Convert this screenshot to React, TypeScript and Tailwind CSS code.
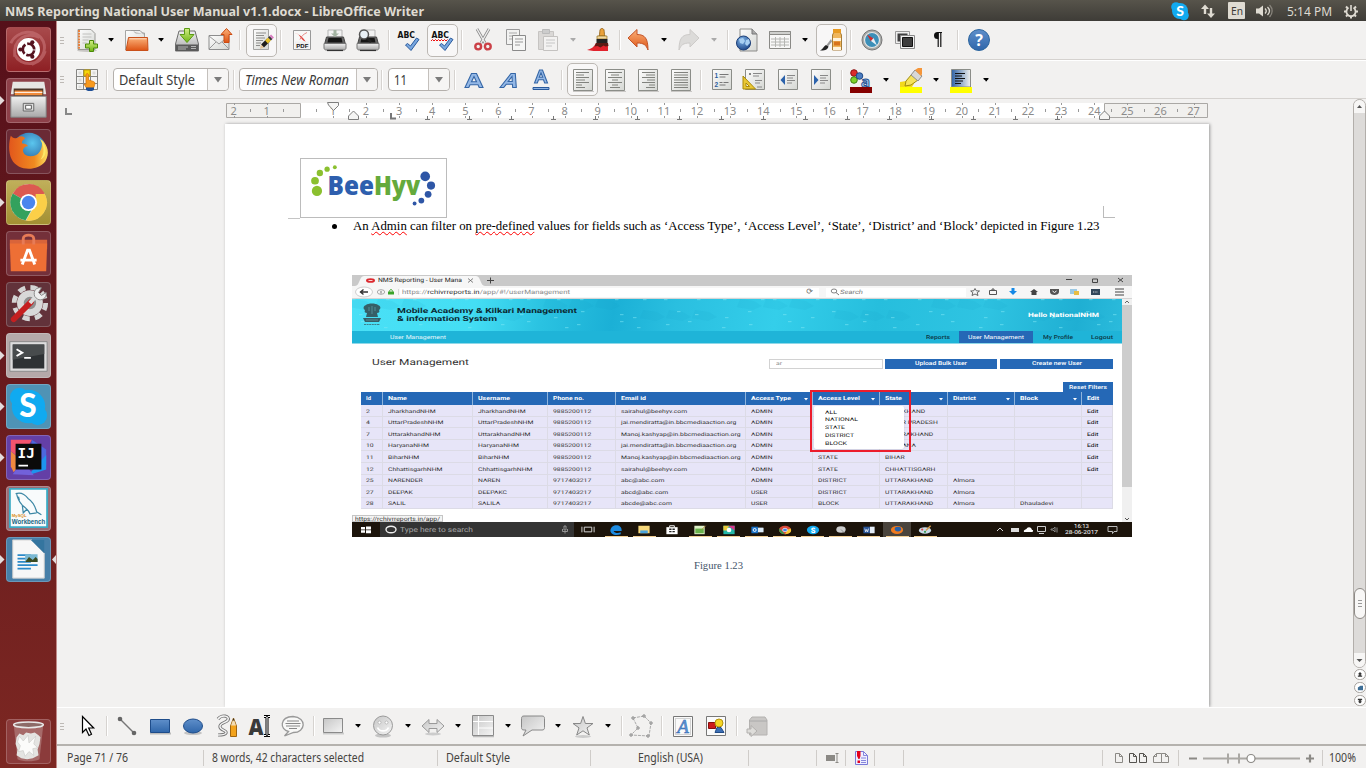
import React, { useLayoutEffect, useRef, useState } from "react";

/* Text stretched or condensed horizontally so that it fills a given width. */
function Fit({ w, className = "", children }: { w: number; className?: string; children: React.ReactNode }) {
  const ref = useRef<HTMLSpanElement>(null);
  const [scale, setScale] = useState(1);
  useLayoutEffect(() => {
    if (ref.current && ref.current.offsetWidth > 0) {
      const r = document.createRange();
      r.selectNodeContents(ref.current);
      const natural = r.getBoundingClientRect().width;
      if (natural > 0) setScale(w / natural);
    }
  }, [w]);
  return (
    <span className={"inline-block shrink-0 whitespace-nowrap text-left " + className} style={{ width: w }}>
      <span ref={ref} className="inline-block origin-left" style={{ transform: `scaleX(${scale})` }}>
        {children}
      </span>
    </span>
  );
}

type P = { m?: string; children?: React.ReactNode };

const Ic = ({ m = "", children }: P) => (
  <svg className={"h-[26px] w-[26px] shrink-0 " + m} viewBox="0 0 26 26" fill="none">
    {children}
  </svg>
);
const Btn = ({ m = "", children }: P) => (
  <div className={"flex h-[33px] w-[31px] shrink-0 items-center justify-center rounded-[5px] border border-[#bcb8b3] bg-[#f8f7f7] " + m}>
    <Ic>{children}</Ic>
  </div>
);
const Sep = ({ m = "" }: P) => <div className={"h-5 w-[2px] shrink-0 border-l border-[#d6d3d0] bg-white " + m} />;
const Arr = ({ m = "", c = "#000" }: { m?: string; c?: string }) => (
  <svg className={"h-[8px] w-[8px] shrink-0 " + m} viewBox="0 0 8 8">
    <path d="M1.500 2h5v1l-1.500 1.500v.7H3.500v-.7L1.500 3z" fill={c} />
  </svg>
);
const Grip = ({ m = "" }: P) => (
  <div className={"flex w-[4px] shrink-0 flex-col gap-[2px] " + m}>
    <i className="h-px bg-[#bdb9b5]" />
    <i className="h-px bg-[#bdb9b5]" />
    <i className="h-px bg-[#bdb9b5]" />
  </div>
);

const Defs = () => (
  <svg className="absolute h-0 w-0">
    <defs>
      <linearGradient id="gGreen" x1="0" y1="0" x2="0" y2="1"><stop offset="0" stopColor="#d2ef85" /><stop offset="1" stopColor="#6fb414" /></linearGradient>
      <linearGradient id="gOrange" x1="0" y1="0" x2="0" y2="1"><stop offset="0" stopColor="#fbb27a" /><stop offset="1" stopColor="#dd5314" /></linearGradient>
      <linearGradient id="gGrey" x1="0" y1="0" x2="0" y2="1"><stop offset="0" stopColor="#f0f0f0" /><stop offset="1" stopColor="#a8a8a8" /></linearGradient>
      <linearGradient id="gBlue" x1="0" y1="0" x2="0" y2="1"><stop offset="0" stopColor="#5f8fca" /><stop offset="1" stopColor="#2f66aa" /></linearGradient>
      <linearGradient id="gSheet" x1="0" y1="0" x2="1" y2="1"><stop offset="0" stopColor="#fdfdfd" /><stop offset="1" stopColor="#d5d7d3" /></linearGradient>
      <linearGradient id="gSoft" x1="0" y1="0" x2="1" y2="1"><stop offset="0" stopColor="#c6c6c6" /><stop offset="1" stopColor="#f4f4f4" /></linearGradient>
      <linearGradient id="gBg" x1="0" y1="0" x2="1" y2="0"><stop offset="0" stopColor="#2f62a5" /><stop offset="1" stopColor="#f1f1ee" /></linearGradient>
      <radialGradient id="gGlobe" cx=".4" cy=".3" r=".8"><stop offset="0" stopColor="#7fb5e8" /><stop offset="1" stopColor="#153c80" /></radialGradient>
      <radialGradient id="gFox" cx=".6" cy=".3" r=".8"><stop offset="0" stopColor="#5bc6ee" /><stop offset="1" stopColor="#143a80" /></radialGradient>
      <linearGradient id="gFoxBody" x1="0" y1="0" x2="1" y2="0"><stop offset="0" stopColor="#e2571c" /><stop offset=".65" stopColor="#f08a20" /><stop offset="1" stopColor="#fde060" /></linearGradient>
    </defs>
  </svg>
);

/* ---------- toolbar drawings ---------- */
const NewDoc = () => (
  <>
    <ellipse cx="13" cy="23.500" rx="10" ry="1.500" fill="#c9c7c4" />
    <path d="M4 2.500h13l4 4v16H4z" fill="url(#gSheet)" stroke="#9a9a96" />
    <path d="M5 3v19" stroke="#e5813f" strokeWidth="2" strokeDasharray="2 .8" />
    <path d="M8.500 7h9M8.500 10h9M8.500 13h6M8.500 16h4" stroke="#c0c0be" />
    <path d="M15.500 13.500h4v3.500h4v4h-4v3.500h-4V21h-4v-4h4z" fill="url(#gGreen)" stroke="#4a8a08" />
  </>
);
const OpenDoc = () => (
  <>
    <path d="M2.500 23V3.500h8l2 2.500h9V14" fill="url(#gSheet)" stroke="#a5a5a3" />
    <path d="M8 3.500h9l4 4" stroke="#999" fill="#eee" />
    <path d="M5.500 10.500h19l.5 13H3z" fill="url(#gOrange)" stroke="#c9501a" />
    <path d="M6.500 11.800h17" stroke="#fddac0" />
  </>
);
const SaveIc = () => (
  <>
    <path d="M5 4h16l3.500 13v7H1.500v-7z" fill="url(#gGrey)" stroke="#6d6d6d" />
    <path d="M2 17.500h22V24H2z" fill="#5a5a5a" />
    <path d="M4 20h10M4 22h8M17 19.500h5M17 21.500h5" stroke="#ccc" strokeWidth=".8" />
    <path d="M10.500 1.500h5v6h4.500L13 15.500 6 7.500h4.500z" fill="url(#gGreen)" stroke="#5a9a14" />
  </>
);
const MailIc = () => (
  <>
    <path d="M2 8.500h20v14H2z" fill="url(#gSheet)" stroke="#8d8d8d" />
    <path d="M2 9l10 8 10-8M2 22l7-7M22 22l-7-7" stroke="#9a9a9a" />
    <path d="M19.500 1.500L25 7.500H22v8h-5v-8h-3z" fill="url(#gOrange)" stroke="#cc4a10" />
  </>
);
const EditIc = () => (
  <>
    <path d="M4.500 2.500h15v20h-15z" fill="url(#gSheet)" stroke="#a5a5a3" />
    <path d="M7 6h10M7 8.500h8M7 11h9M7 13.500h7M7 16h5M7 18.500h4" stroke="#8d8d8b" />
    <path d="M13.500 19l6-6" stroke="#1d1d1d" strokeWidth="4" />
    <path d="M17.500 15l3-3" stroke="#e5c12c" strokeWidth="4" />
    <path d="M20.500 12l1.500-1.500" stroke="#333" strokeWidth="4" />
    <path d="M22 10.500l1.500-1.500" stroke="#d77bc0" strokeWidth="4" />
    <path d="M12 17.500l-1 4.500 4-1.500z" fill="#e5c596" />
  </>
);
const PdfIc = () => (
  <>
    <path d="M4.500 3.500h17v19h-17z" fill="#f8f8f7" stroke="#999" />
    <path d="M6 6c3 .5 8 4 11 9-3-1-5-4-8-8z" fill="#e2413b" />
    <path d="M18 5.500c-4 2-6 4-7 7" stroke="#e58a86" />
    <path d="M6 14.500h14v7H6z" fill="#f0f0f0" />
    <text x="7.300" y="20.500" fontSize="6" fontWeight="900" fontFamily="Liberation Sans, sans-serif" fill="#111">PDF</text>
  </>
);
const PrintIc = ({ glass = false }: { glass?: boolean }) => (
  <>
    <path d="M6 3h14v11H6z" fill="#f2f2f2" stroke="#b5b5b5" />
    <path d="M4.500 10h17l2 7.500h-21z" fill="#666" stroke="#444" />
    <path d="M6.500 11h13l1 4.500H5.500z" fill="#161616" />
    <path d="M2 16.500h22V21c0 1-1 2-2 2H4c-1 0-2-1-2-2z" fill="url(#gGrey)" stroke="#777" />
    <path d="M5 23.500h16" stroke="#333" strokeWidth="1.200" />
    {glass ? (
      <>
        <circle cx="9" cy="7.500" r="4.500" fill="#e8f0f6" stroke="#555" strokeWidth="1.500" />
        <path d="M12 11l4 4" stroke="#222" strokeWidth="2.500" />
      </>
    ) : (
      <path d="M11.500 3h3v3.500H17L13 10 9 6.500h2.500z" fill="#a3b3a2" />
    )}
  </>
);
const AbcIc = ({ wave = false }: { wave?: boolean }) => (
  <>
    <text x="1.500" y="11" fontSize="9" fontWeight="900" textLength="17.500" lengthAdjust="spacingAndGlyphs" fontFamily="DejaVu Sans, sans-serif" fill="#111">ABC</text>
    {wave && <path d="M1 14l1.500-1.500L4 14l1.500-1.500L7 14l1.500-1.500L10 14l1.500-1.500L13 14l1.500-1.500L16 14l1.500-1.500" stroke="#e11" />}
    <path d="M9.500 18l2-1.500 3 2.500L20.500 11l2.500 1.500L15 23.500z" fill="#79a7df" stroke="#2a5a9c" />
  </>
);
const CutIc = () => (
  <>
    <path d="M7 2l8 14M19 2l-8 14" stroke="#888" strokeWidth="2.800" />
    <path d="M7 2l8 14M19 2l-8 14" stroke="#ededed" strokeWidth="1.400" />
    <circle cx="8.200" cy="19.500" r="2.900" stroke="#cb4047" strokeWidth="2.400" />
    <circle cx="17.800" cy="19.500" r="2.900" stroke="#cb4047" strokeWidth="2.400" />
  </>
);
const CopyIc = () => (
  <>
    <path d="M3.500 2.500h13v15h-13z" fill="#f2f2f1" stroke="#999" />
    <path d="M6 6h8M6 9h5M6 12h5" stroke="#aaa" />
    <path d="M9.500 8.500h13v15h-13z" fill="#f6f6f5" stroke="#8a8a8a" />
    <path d="M12 12h8M12 15h8M12 18h5" stroke="#999" />
  </>
);
const PasteIc = () => (
  <>
    <path d="M3.500 4.500h15v18h-15z" fill="#dad8d6" stroke="#c6c4c2" />
    <path d="M7.500 2.500h7v4h-7z" fill="#ccc" stroke="#bbb" />
    <path d="M8.500 9.500h14v14h-14z" fill="#f3f2f1" stroke="#c4c2c0" />
    <path d="M11 13h9M11 16h9M11 19h6" stroke="#c6c6c6" />
  </>
);
const BrushIc = () => (
  <>
    <path d="M1 23c4-1 7-3 9-7l12 1v7c-6 0-14 .5-21-1z" fill="#e1222c" />
    <path d="M13 9c1-2 .5-4 1-6 .5-2 3.500-2 4 0s0 4 1 6z" fill="#eaa23b" stroke="#8b5b12" strokeWidth=".8" />
    <path d="M11 9h10v3H11z" fill="#f2d9a1" stroke="#96701d" strokeWidth=".7" />
    <path d="M10.500 12h11v4h-11z" fill="#222" />
    <path d="M10 16h12l.5 3-3 .5-2-1-3 2-3-1.500-3 .5z" fill="#5b1a14" />
  </>
);
const Undo = ({ off = false }: { off?: boolean }) => (
  <g transform={off ? "translate(26 0) scale(-1 1)" : undefined}>
    <path d="M3 11L12 2.500v5c8 0 11 4 11 15.500-2-5-4-7-11-7v4z" fill={off ? "#dcdbd9" : "url(#gOrange)"} stroke={off ? "#cdcbc9" : "#c4552a"} />
  </g>
);
const GlobeIc = () => (
  <>
    <path d="M6 2h12l5 5v17H6z" fill="url(#gSheet)" stroke="#8d8d8a" />
    <path d="M18 2v5h5" fill="#aaa" stroke="#777" />
    <circle cx="9.500" cy="16" r="7" fill="url(#gGlobe)" stroke="#1b3e78" />
    <path d="M5 12l4-1 2 3-2 3-3-1zM12 13l3-1 1 4-3 3-2-2z" fill="#a8cff2" />
  </>
);
const TableIc = () => (
  <>
    <path d="M2.500 4.500h21v17h-21z" fill="#f7f7f6" stroke="#8a8a86" />
    <path d="M2.500 4.500h21v3h-21z" fill="#cfd0cd" stroke="#8a8a86" />
    <path d="M4 12h18M4 15h18M4 18h18M8.500 10v10M13 10v10M17.500 10v10" stroke="#b5b6b2" />
  </>
);
const PaintIc = () => (
  <>
    <path d="M13.500 8l1.500-3h6l1.500 3v15h-9z" fill="#f0b65b" stroke="#a57d3a" />
    <path d="M14 2h8v4h-8z" fill="#e79a22" />
    <path d="M14 11h8v3h-8zM14 20h8v3h-8z" fill="#fff3dc" />
    <path d="M15 14.500h6v4h-6z" fill="#d8741b" />
    <path d="M12 12L7.500 18l1.500 1.500 4-5z" fill="#999" />
    <path d="M7 18c-2 1-3 4-6 5.500 4 0 7.500 0 8.500-4z" fill="#222" />
  </>
);
const CompassIc = () => (
  <>
    <circle cx="13" cy="13" r="10" fill="#a9aba8" stroke="#777" />
    <circle cx="13" cy="13" r="7.500" fill="#3c8fb8" stroke="#e5e5e5" strokeWidth="1.200" />
    <path d="M8 7.500l6.500 4-2.500 3z" fill="#d42a2a" />
    <path d="M18 18.500l-6-4.500 2.500-3z" fill="#e6f0f6" />
  </>
);
const ScreensIc = () => (
  <>
    <path d="M3.500 4.500h14v12h-14z" fill="#eee" stroke="#999" />
    <path d="M5.500 6.500h10v8h-10z" fill="#3f3f3f" />
    <path d="M8.500 8.500h14v13h-14z" fill="#f1f1f1" stroke="#888" />
    <path d="M10.500 10.500h10v9h-10z" fill="#3d3d3d" stroke="#111" />
  </>
);
const HelpIc = () => (
  <>
    <circle cx="13" cy="13" r="10.500" fill="url(#gBlue)" stroke="#2c669f" />
    <text x="13" y="19" textAnchor="middle" fontSize="16" fontWeight="700" fontFamily="Noto Sans, sans-serif" fill="#fff">?</text>
  </>
);
const StylesIc = () => (
  <>
    <path d="M2.500 2.500h21v20h-21z" fill="#f4f4f3" stroke="#858582" />
    <path d="M2 9.500h22M2 16.500h22M9.500 2v21M16.500 2v21" stroke="#858582" />
    <path d="M4.500 4.500h3v3h-3zM18.500 4.500h3v3h-3zM4.500 11.500h3v3h-3zM4.500 18.500h3v2.500h-3z" fill="#dcdcda" />
    <path d="M10 3h6v6h-6z" fill="#f5d60a" stroke="#c4a000" />
    <path d="M12 8c0-2 2.500-2 2.500 0v5l5 1.500c1.500.5 1.500 2 1 4L19.500 21h-7l-2.500-4 2 .5z" fill="#f79a1e" stroke="#d87a10" strokeWidth=".8" />
    <path d="M12 20.500h8V23l-2 1h-4l-2-1z" fill="#1f4f96" />
  </>
);
const LetterA = ({ kind }: { kind: "b" | "i" | "u" }) => (
  <>
    <path
      d={
        kind === "b"
          ? "M4 20.500l6.500-14h5l6.500 14h-3.800l-1.200-2.700H9L7.800 20.500zM10.500 14.800h5L13 9.500z"
          : kind === "i"
          ? "M5 20.500l11-14h4.300l1 14h-3.600l-.3-3.200h-6.200l-2.500 3.200zM13.200 14.500h4.100l-.3-5z"
          : "M6.500 16l5-13h3l5 13h-2.800l-1.200-3.200h-5L9.300 16zM11.300 10.200h3.400L13 5.800z"
      }
      fill="#94b8e6"
      stroke="#3566a6"
      strokeWidth="1.100"
      fillRule="evenodd"
    />
    {kind === "u" && <path d="M5 20.500h16v2H5z" fill="#8fb3e2" stroke="#28599b" />}
  </>
);
const AlignIc = ({ d }: { d: string }) => (
  <>
    <path d="M3 24.500h21" stroke="#c9c7c5" />
    <path d="M3.500 2.500h19v21h-19z" fill="url(#gSheet)" stroke="#8b8d88" />
    <path d={d} stroke="#80827d" strokeWidth="1" />
  </>
);
const Sheet = ({ children }: P) => (
  <>
    <path d="M3.500 2.500h19v20h-19z" fill="url(#gSheet)" stroke="#8b8d88" />
    {children}
  </>
);

const Combo = ({ m, text, w, fs }: { m: string; text: string; w: number; fs: string }) => (
  <div className={"flex h-[23px] shrink-0 items-center rounded-[4px] border border-[#b4b0ac] bg-white text-[13.500px] text-[#3a3a3a] " + m}>
    <Fit w={w} className={"ml-[5px] pt-px leading-[21px] " + fs}>{text}</Fit>
    <div className="ml-auto flex h-full w-[21px] items-center justify-center rounded-r-[4px] border-l border-[#c4c0bc] bg-[#f6f5f4]">
      <svg className="h-[6px] w-[8px]" viewBox="0 0 8 6"><path d="M0 0h8L4 5.500z" fill="#7b7b7b" /></svg>
    </div>
  </div>
);

function Ruler() {
  const x = (n: number) => 299.8 + 33.1 * n - 225;
  const marks = Array.from({ length: 30 }, (_, i) => i - 2);
  return (
    <svg className="ml-[168px] h-[24px] w-[990px] shrink-0" viewBox="0 0 990 24">
      <path d="M75 4h805v15H75z" fill="#fff" />
      <path d="M1.500 4.500h74v14h-74zM879.500 4.500h103v14h-103z" fill="#f1f0ee" stroke="#aaa8a5" />
      {marks.map((n) => (
        <React.Fragment key={n}>
          {n !== 0 && n < 28 && (
            <text x={x(n)} y="15.500" textAnchor="middle" fontSize="11" fontFamily="Noto Sans, sans-serif" fill="#8b8b8b">{Math.abs(n)}</text>
          )}
          {n < 27 && <path d={`M${Math.round(x(n) + 16.5) + 0.5} 10v3`} stroke="#999" />}
          {n !== 0 && n < 28 && <path d={`M${Math.round(x(n)) + 0.5} 4v2M${Math.round(x(n)) + 0.5} 17v2`} stroke="#999" />}
        </React.Fragment>
      ))}
      <path d="M102.500 3.500h11v3l-5 5-5-5.500z" fill="#f5f5f4" stroke="#7d7d7d" />
      <path d="M123.500 20.500v-3.500l5-5 5 5v3.500zM874.500 20.500v-3.500l5-5 5 5v3.500z" fill="#f5f5f4" stroke="#7d7d7d" />
      <path d="M166 14v5.500h5" stroke="#777" strokeWidth="2" fill="none" />
      {Array.from({ length: 17 }, (_, i) => 201.5 + 42 * i).filter((v) => v < 870).map((v) => (
        <path key={v} d={`M${Math.round(v)}.5 17v3M${Math.round(v) - 2} 20.500h5`} stroke="#777" />
      ))}
    </svg>
  );
}

/* ---------- launcher ---------- */
const Tile = ({ bg, children, run, m = "" }: { bg: string; children: React.ReactNode; run?: "l" | "lr"; m?: string }) => (
  <div className={"flex h-[45px] w-full shrink-0 items-center " + m}>
    <svg className="h-[9px] w-[5px]" viewBox="0 0 5 9">{run && <path d="M0 0l4.500 4.500L0 9z" fill="#e4dcdc" />}</svg>
    <div className={"ml-px h-[45px] w-[45px] overflow-hidden rounded-[4px] border border-white/20 " + bg}>
      <svg className="h-[43px] w-[43px]" viewBox="0 0 45 45" fill="none">{children}</svg>
    </div>
    <svg className="ml-px h-[9px] w-[4px]" viewBox="0 0 4 9">{run === "lr" && <path d="M4 0L0 4.500 4 9z" fill="#e4dcdc" />}</svg>
  </div>
);

const Launcher = () => (
  <div className="flex w-[57px] shrink-0 flex-col gap-[6px] border-r border-[#c08a88] bg-gradient-to-b from-[#56101a] to-[#7c2722] pt-[6px]">
    <Tile bg="bg-gradient-to-b from-[#a84a4c] to-[#8e1f24]">
      <path d="M4 16C10 2 32 0 38 14c4 10-2 20-12 24M8 30C6 10 22 4 34 10M40 24C34 42 14 40 8 28" stroke="#c9777a" strokeWidth="3" opacity=".6" />
      <circle cx="22.500" cy="22.500" r="12" fill="#fff" />
      <circle cx="22.500" cy="22.500" r="6" stroke="#571420" strokeWidth="2.800" strokeDasharray="10.570 2" strokeDashoffset="-1" />
      <circle cx="14" cy="22.500" r="2.200" fill="#571420" /><circle cx="26.500" cy="15" r="2.200" fill="#571420" /><circle cx="26.500" cy="30" r="2.200" fill="#571420" />
    </Tile>
    <Tile bg="bg-[#8d4049]" run="l">
      <path d="M6 3h33l2 13H4z" fill="#e6e6e4" /><path d="M7 10h31v8H7z" fill="#4a3528" /><path d="M8 12h29v5H8z" fill="#f08b3c" /><path d="M8 14h29" stroke="#fff" />
      <path d="M4 18h37v22H4z" fill="url(#gGrey)" stroke="#7f7f7f" /><path d="M17 25.500h11v8H17z" fill="#ddd" stroke="#666" /><path d="M19.500 27.500h6v4h-6z" fill="#fff" stroke="#555" />
    </Tile>
    <Tile bg="bg-[#6a2a35]">
      <circle cx="23" cy="21" r="18" fill="url(#gFox)" />
      <path d="M4 6c3 3 4 3 7 2 3-2 6-2 8 1-2 1-4 3-3 5 3 0 5 1 6 3-3 0-6 2-5 6 2 6 13 6 17 0 3-4 3-9 2-13 7 6 9 15 4 23C31 44 11 43 5 31 1 23 2 12 4 6z" fill="url(#gFoxBody)" />
      <path d="M34 9c5 7 6 16 1 22 7-2 8-16-1-22z" fill="#fde868" />
    </Tile>
    <Tile bg="bg-gradient-to-b from-[#c0af5a] to-[#a39032]" run="l">
      <circle cx="22.500" cy="22.500" r="19" fill="#ddd" />
      <path d="M22.500 22.500L6 13a19 19 0 0133 0z" fill="#dc5a50" /><path d="M22.500 3.500a19 19 0 0117 9.500H22.500z" fill="#dc5a50" />
      <path d="M6 13a19 19 0 0013.500 28.200L28 26z" fill="#33a15d" /><path d="M39.500 13.500A19 19 0 0120 41.400L30 24V13.500z" fill="#fbcf48" />
      <circle cx="22.500" cy="22.500" r="9" fill="#fff" /><circle cx="22.500" cy="22.500" r="7" fill="#4a85ee" />
    </Tile>
    <Tile bg="bg-[#74303a]">
      <path d="M3 8h39v10H3z" fill="#d9643a" /><path d="M3 12h39l-1 29H4z" fill="#ee6f35" /><path d="M17 13V7c0-5 11-5 11 0v6" stroke="#e77b56" strokeWidth="3" />
      <path d="M16 34l5.500-15h2l5.500 15M14 29.500h17" stroke="#fff" strokeWidth="3" />
    </Tile>
    <Tile bg="bg-[#62323a]">
      <circle cx="24" cy="21" r="16.500" stroke="#d5d5d5" strokeWidth="5" strokeDasharray="7.500 5.460" /><circle cx="24" cy="21" r="13.500" fill="#d8d8d8" /><circle cx="24" cy="21" r="6.500" fill="#8e8e8e" />
      <path d="M7 38L25 20" stroke="#c51f20" strokeWidth="6" strokeLinecap="round" /><path d="M24 21l7-8" stroke="#ddd" strokeWidth="4" />
      <path d="M29 14c-2-6 2-10 7-9l-3 5 3 3 5-3c1 6-5 9-9 7z" fill="#eee" stroke="#888" />
    </Tile>
    <Tile bg="bg-[#b5a9a9]" run="l">
      <path d="M3 8h39v31H3z" fill="#dcdcdc" stroke="#888" /><path d="M6 11h33v25H6z" fill="#2e3234" /><path d="M6 11h33v10L6 27z" fill="#484c4d" />
      <path d="M10 16l6 3.500-6 3.500M18 25h7" stroke="#fff" strokeWidth="2" />
    </Tile>
    <Tile bg="bg-[#4f93b5]" run="l">
      <circle cx="22.500" cy="22.500" r="17.500" fill="#10aaf0" /><circle cx="13" cy="13" r="10" fill="#10aaf0" /><circle cx="32" cy="32" r="10" fill="#10aaf0" />
      <text x="22" y="34" textAnchor="middle" fontSize="33" fontWeight="900" fontFamily="Lato, sans-serif" fill="#fff">S</text>
    </Tile>
    <Tile bg="bg-[#643fa6]" run="l">
      <path d="M4 4h22L15 24 4 16z" fill="#f4546e" /><path d="M26 4l15 10v17L24 22z" fill="#4d67de" /><path d="M4 16l12 10-9 12-3-6z" fill="#f1893f" /><path d="M22 41l19-6V20z" fill="#1d94ee" /><path d="M6 40l10-14 12 15z" fill="#7261da" />
      <path d="M9 8h27v27H9z" fill="#0b0b0b" />
      <text x="11" y="23" fontSize="15" fontWeight="700" fontFamily="DejaVu Sans Mono, monospace" fill="#fff">IJ</text><path d="M12 31h10" stroke="#fff" strokeWidth="2" />
    </Tile>
    <Tile bg="bg-[#9b6d75]">
      <path d="M3 2h39v40H3z" fill="#f8fbfc" stroke="#3baac4" strokeWidth="2" />
      <path d="M9 7c6-2 10 1 13 5 6 4 8 10 9 14l5 3M31 27l-7 1c-1-3-4-6-8-9-3-3-5-7-6-12M16 19l1 8 4-4M13 14l-1-4" stroke="#3c87a5" strokeWidth="1.300" />
      <text x="5" y="31" fontSize="4.500" fontWeight="700" fontFamily="Liberation Sans, sans-serif" fill="#d88d1b">MySQL</text>
      <text x="5" y="39" fontSize="7" fontWeight="700" textLength="35" lengthAdjust="spacingAndGlyphs" fontFamily="Liberation Sans, sans-serif" fill="#17647f">Workbench</text>
    </Tile>
    <Tile bg="bg-[#477fa8]" run="lr">
      <path d="M6 2h20l13 14v26H6z" fill="#f7f7f7" stroke="#ccc" /><path d="M25 2h14v14z" fill="#34759f" />
      <path d="M11 18h14M11 21.500h14M11 25h14M11 28.500h21M11 32h14" stroke="#2b8ac9" strokeWidth="1.800" /><path d="M19 17h13v8H19z" fill="#7ab8d2" /><path d="M19 25l4-5 4 3 3-3 2 2v3z" fill="#3b4b20" />
    </Tile>
    <Tile bg="bg-[#8b3b3b]" m="mt-auto mb-[4px]">
      <path d="M7 5l4 36c6 3 17 3 23 0l4-36z" fill="#c7a5a1" opacity=".45" /><ellipse cx="22.500" cy="5" rx="15.500" ry="3" fill="#8d6b68" stroke="#e9e9e9" strokeWidth="1.600" />
      <path d="M10 18l3-4 4 2 3-3 5 1 4-1 4 3 2 2-1 7-2 6 1 6-6 3-6 1-6-1-5-3 1-6-2-6z" fill="#e4e4e2" />
      <path d="M13 17l4 5 5-6 1 8 7-7-2 8 4 4-5 1 1 7-5-4-4 5-2-6-5 1 2-6-3-4z" fill="#fbfbfa" stroke="#bdbdbb" strokeWidth=".5" />
    </Tile>
  </div>
);

/* ---------- embedded browser figure ---------- */
const G = ({ children, className = "" }: { children?: React.ReactNode; className?: string }) => (
  <span className={"inline-block origin-left scale-x-[1.36] whitespace-nowrap " + className}>{children}</span>
);
const rows = [
  ["2", "JharkhandNHM", "JharkhandNHM", "9885200112", "sairahul@beehyv.com", "ADMIN", "", "JHARKHAND", "", "", "Edit"],
  ["4", "UttarPradeshNHM", "UttarPradeshNHM", "9885200112", "jai.mendiratta@in.bbcmediaaction.org", "ADMIN", "", "UTTAR PRADESH", "", "", "Edit"],
  ["7", "UttarakhandNHM", "UttarakhandNHM", "9885200112", "Manoj.kashyap@in.bbcmediaaction.org", "ADMIN", "", "UTTARAKHAND", "", "", "Edit"],
  ["10", "HaryanaNHM", "HaryanaNHM", "9885200112", "jai.mendiratta@in.bbcmediaaction.org", "ADMIN", "", "HARYANA", "", "", "Edit"],
  ["11", "BiharNHM", "BiharNHM", "9885200112", "Manoj.kashyap@in.bbcmediaaction.org", "ADMIN", "STATE", "BIHAR", "", "", "Edit"],
  ["12", "ChhattisgarhNHM", "ChhattisgarhNHM", "9885200112", "sairahul@beehyv.com", "ADMIN", "STATE", "CHHATTISGARH", "", "", "Edit"],
  ["25", "NARENDER", "NAREN", "9717403217", "abc@abc.com", "ADMIN", "DISTRICT", "UTTARAKHAND", "Almora", "", ""],
  ["27", "DEEPAK", "DEEPAKC", "9717403217", "abcd@abc.com", "USER", "DISTRICT", "UTTARAKHAND", "Almora", "", ""],
  ["28", "SALIL", "SALILA", "9717403217", "abcde@abc.com", "USER", "BLOCK", "UTTARAKHAND", "Almora", "Dhauladevi", ""],
];
const heads: [string, number][] = [["Id", 5], ["Name", 19], ["Username", 32], ["Phone no.", 31], ["Email id", 25], ["Access Type", 40], ["Access Level", 42], ["State", 17], ["District", 23], ["Block", 18], ["Edit", 12]];
const cols = "grid grid-cols-[22px_90px_75px_68px_130px_67px_67px_68px_67px_67px_31px]";

const taskIcons: React.ReactNode[] = [
  <path key="0" d="M9 5.500h8v5H9zM6.500 5v6M19.500 5v6" stroke="#ddd" fill="none" />,
  <path key="1" d="M7 9c1-8 13-7 12 .5h-8.500c1 2.500 5 2.500 7.500 1.500v2c-6 2-11 0-11-4z" fill="#1d8be0" />,
  <g key="2"><path d="M7 4h12v8H7z" fill="#f6d77a" /><path d="M9 9h8v3H9z" fill="#4aa3dc" /></g>,
  <g key="3"><path d="M7 5.500h12v7.500H7z" fill="#fff" /><path d="M10.500 5.500V4h5v1.500" stroke="#fff" fill="none" /><path d="M10 7h2.500v1.500H10zM13.500 7H16v1.500h-2.500zM10 9.500h2.500V11H10zM13.500 9.500H16V11h-2.500z" fill="#222" /></g>,
  <g key="4"><path d="M7 4h11v9H7z" fill="#dff0c8" /><path d="M8 7h9v5H8z" fill="#6ab24c" /><path d="M15 8l4-4" stroke="#b98a3a" /></g>,
  <g key="5"><path d="M7 4h12v9H7z" fill="#24b8a8" /><path d="M7 4h6l-2 5H7z" fill="#eac93b" /><path d="M12 4h7v5z" fill="#d93689" /><circle cx="13" cy="8.500" r="2.500" fill="#fff" /></g>,
  <g key="6"><path d="M7 5h7v7H7z" fill="#1a73c8" /><path d="M14 6h6v5h-6z" fill="#dcebf8" /><circle cx="10.500" cy="8.500" r="1.600" stroke="#fff" fill="none" /></g>,
  <g key="7"><ellipse cx="13" cy="8.500" rx="6.500" ry="4.500" fill="#db4a3b" /><path d="M7 7l6 6c-5 0-7-3-6-6z" fill="#2ea052" /><path d="M19 7c2 4-2 6-6 6l3-5z" fill="#f6c834" /><ellipse cx="13" cy="8.500" rx="2.600" ry="1.800" fill="#3f80e4" stroke="#fff" strokeWidth=".7" /></g>,
  <g key="8"><ellipse cx="13" cy="8.500" rx="6.500" ry="4.500" fill="#12aaf0" /><text x="10.700" y="11.500" fontSize="8" fontWeight="900" fontFamily="Roboto, sans-serif" fill="#fff">S</text></g>,
  <g key="9"><ellipse cx="13" cy="8" rx="5" ry="3.500" fill="#ccc" /><path d="M13 8l4 4" stroke="#888" /></g>,
  <g key="10"><path d="M7 5h7v7H7z" fill="#2a5699" /><path d="M14 5h5v7h-5z" fill="#e4ecf6" /><path d="M8.500 7l1 3.500 1-2.500 1 2.500 1-3.500" stroke="#fff" strokeWidth=".8" fill="none" /></g>,
  <g key="11"><ellipse cx="13" cy="8.500" rx="6.500" ry="4.300" fill="#f17a1d" /><ellipse cx="14" cy="7.500" rx="3.500" ry="2.500" fill="#2760a8" /></g>,
  <g key="12"><ellipse cx="13" cy="9" rx="6.500" ry="3.500" fill="#c9dbe8" /><circle cx="10" cy="8" r="1.200" fill="#d94c4c" /><circle cx="13" cy="10.500" r="1.200" fill="#3c9b54" /><path d="M14 9l5-5" stroke="#d79b4a" strokeWidth="1.500" /></g>,
];

const Figure = () => (
  <div className="relative flex h-[262px] w-[780px] shrink-0 flex-col bg-white font-[Roboto,sans-serif] text-[5px] leading-[8px] text-[#333] [text-rendering:geometricPrecision]">
    {/* tab strip */}
    <div className="flex h-[11px] items-center bg-[#c9c9c9]">
      <svg className="h-[11px] w-[134px]" viewBox="0 0 134 11"><path d="M3 11C8 11 7 1 12 1h112c5 0 4 10 9 10z" fill="#f6f6f6" /><ellipse cx="18.500" cy="5.500" rx="4.500" ry="2.300" fill="#dc2a30" /><path d="M16.500 5.500h4" stroke="#fff" strokeWidth=".8" /><path d="M116 3.500l5 4M121 3.500l-5 4" stroke="#666" strokeWidth=".8" /></svg>
      <svg className="h-[11px] w-[12px]" viewBox="0 0 12 11"><path d="M1 5.500h7M4.500 2.500v6" stroke="#444" /></svg>
      <svg className="ml-auto h-[11px] w-[72px]" viewBox="0 0 72 11" fill="none"><path d="M6 4.500h6M32.500 4h5v3.500h-5zM58 3l5 4M63 3l-5 4" stroke="#444" /></svg>
      <Fit w={84} className="absolute left-[26px] top-[1.800px] text-[6px] text-[#222]">NMS Reporting - User Mana</Fit>
    </div>
    {/* address bar */}
    <div className="flex h-[13px] items-center border-b border-[#d5d5d5] bg-[#f6f6f6]">
      <svg className="h-[12px] w-[48px]" viewBox="0 0 48 12" fill="none"><ellipse cx="12" cy="6" rx="8.500" ry="5" fill="#fff" stroke="#bbb" strokeWidth=".7" /><path d="M8 6h8M11.500 3.500L8.500 6l3 2.500" stroke="#333" strokeWidth="1.400" /><ellipse cx="29" cy="6" rx="3.700" ry="2.300" stroke="#888" strokeWidth=".7" /><path d="M29 5v2.500" stroke="#777" /><path d="M36 5.500h6v3h-6z" fill="#3aa329" /><path d="M37.500 5.500c0-2.500 3-2.500 3 0" stroke="#3aa329" /><path d="M46.500 3v6" stroke="#ccc" strokeWidth=".7" /></svg>
      <div className="flex h-[9px] w-[419px] items-center bg-white"><Fit w={168} className="ml-[1.500px] pt-[1.500px] text-[6px] text-[#888]">https://<span className="text-[#333]">rchivrreports.in</span>/app/#!/userManagement</Fit><span className="ml-auto mr-[6px] text-[8px] text-[#666]">⟳</span></div>
      <div className="ml-[7px] flex h-[9px] w-[140px] items-center bg-white">
        <svg className="ml-[4px] h-[8px] w-[10px]" viewBox="0 0 10 8" fill="none"><ellipse cx="4" cy="3" rx="2.800" ry="2" stroke="#777" strokeWidth=".9" /><path d="M6 4.500L9 7" stroke="#777" /></svg>
        <Fit w={23} className="pt-[1.500px] text-[6px] italic text-[#777]">Search</Fit>
      </div>
      <svg className="ml-auto h-[12px] w-[162px]" viewBox="0 0 162 12" fill="none"><path d="M5 2.500l1.300 2.300 3.200.2-2.300 1.700.8 2.800-3-1.500-3 1.500.8-2.800L.7 5l3-.2z" stroke="#444" strokeWidth=".8" /><path d="M19.500 4.500h7v4h-7zM22 4.500V3h2v1.500" stroke="#555" /><path d="M41.500 2h3v3h2.500L43 9l-4-4h2.500z" fill="#1689e6" /><path d="M60 6l4-3 4 3h-1.500v3h-5V6z" fill="#444" /><path d="M80 3h9v3c0 4-9 4-9 0z" fill="#555" /><path d="M82.500 5l2 1.500 2-1.500" stroke="#fff" /><path d="M100 3h7v5h-7z" fill="#9cc9e4" /><path d="M104 5h5v4h-5z" fill="#e8bd45" /><path d="M121 3h9v6h-9z" fill="#334659" /><path d="M123 6h5" stroke="#fff" strokeWidth=".8" strokeDasharray="1 .7" /><path d="M145 3h9M145 6h9M145 9h9" stroke="#444" /></svg>
    </div>
    <div className="flex h-[223px]">
      <div className="flex w-[770px] flex-col">
        <div className="relative flex h-[32px] overflow-hidden bg-[linear-gradient(100deg,#4ae0f6_0%,#44def4_16%,#2ac2e1_25%,#1bb0d6_34%,#2abfe0_42%,#34ceea_55%,#26bedd_68%,#2fc4e2_82%,#1fafd3_94%,#2bbbdc_100%)]">
          <svg className="absolute left-0 top-0 h-[32px] w-[770px]" viewBox="0 0 770 32">
            {Array.from({ length: 24 }, (_, i) => (
              <path key={i} d={`M${(i * 97) % 750} ${(i * 11) % 22}l14 2 8 5-9 4-16-3z`} fill="#149fc6" opacity=".1" />
            ))}
            {Array.from({ length: 84 }, (_, i) => (
              <path key={"d" + i} d={`M${Math.floor(i / 3) * 28 + ((i * i * 7) % 19)} ${(i % 3) * 10 + ((i * i * 5) % 9)}h3.500v1.200h-3.500z`} fill="#7fe8f6" opacity=".5" />
            ))}
          </svg>
          <svg className="relative ml-[9px] mt-[4px] h-[23px] w-[22px]" viewBox="0 0 22 23"><path d="M5 2c2-2 10-2 12 0 3 1 3 4 1 5 1 2 0 3-2 3l1 4H5l1-4c-2 0-3-1-2-3-2-1-2-4 1-5zM2 15h18l-2 4H4z" fill="#365f67" /><path d="M8 4v4M11 3v8M14 4v4M5 17h12" stroke="#5b9ba3" strokeWidth=".8" /><path d="M3 21.500h16" stroke="#3d7f8a" strokeWidth="1" strokeDasharray="2 .6" /></svg>
          <div className="relative ml-[13.500px] mt-[8px] flex flex-col text-[7px] font-bold leading-[8px] text-[#0c2a33]">
            <Fit w={180}>Mobile Academy &amp; Kilkari Management</Fit>
            <Fit w={100}>&amp; information System</Fit>
          </div>
          <Fit w={71} className="relative ml-auto mr-[23px] mt-[13px] text-[6px] font-bold text-white">Hello NationalNHM</Fit>
        </div>
        <div className="flex h-[13px] items-center border-b border-[#8fd8e8] bg-[#1fb4d8] text-[5.500px] text-[#0c3a48]">
          <Fit w={56} className="ml-[38px] pt-[1.500px] text-[#e6f8fc]">User Management</Fit>
          <Fit w={24} className="ml-[480px] pt-[1.500px] font-medium">Reports</Fit>
          <div className="ml-[9px] flex h-full w-[74px] items-center justify-center bg-[#2568b6] pt-[1.500px] text-white"><Fit w={56}>User Management</Fit></div>
          <Fit w={30} className="ml-[10px] pt-[1.500px] font-medium">My Profile</Fit>
          <Fit w={22} className="ml-[18px] pt-[1.500px] font-medium">Logout</Fit>
        </div>
        <div className="mt-[13px] flex h-[11px] items-center">
          <Fit w={97} className="ml-[20px] text-[8.500px] leading-[10px] text-[#333]">User Management</Fit>
          <div className="ml-[300px] mt-[3px] flex h-[10px] w-[114px] items-center border border-[#d2d2d2] pl-[6px] text-[#888]"><Fit w={6}>ar</Fit></div>
          <div className="ml-[2px] mt-[3px] flex h-[10px] w-[112px] items-center justify-center bg-[#2568b6] text-[5.500px] font-medium text-white"><Fit w={52}>Upload Bulk User</Fit></div>
          <div className="ml-[3px] mt-[3px] flex h-[10px] w-[113px] items-center justify-center bg-[#2568b6] text-[5.500px] font-medium text-white"><Fit w={50}>Create new User</Fit></div>
        </div>
        <div className="ml-[711px] mt-[14px] flex h-[10px] w-[50px] items-center justify-center bg-[#2568b6] pt-[1.500px] text-[5.500px] font-medium text-white"><Fit w={38}>Reset Filters</Fit></div>
        <div className="ml-[9px] w-[752px]">
          <div className={cols + " h-[13px] bg-[#2568b6] text-[5.500px] font-bold text-white"}>
            {heads.map(([h, w], i) => (
              <div key={h} className="flex items-center border-r border-[#8fb4dc] pl-[5px] pt-[1.500px] last:border-r-0">
                <Fit w={w}>{h}</Fit>
                {i > 4 && i < 10 && <svg className="ml-auto mr-[4px] h-[3px] w-[4px]" viewBox="0 0 4 3"><path d="M0 0h4L2 2.500z" fill="#fff" /></svg>}
              </div>
            ))}
          </div>
          {rows.map((r) => (
            <div key={r[0]} className={cols + " h-[11.620px] bg-[#e7e5f8]"}>
              {r.map((c, i) => (
                <div key={i} className="flex items-center border-b border-r border-[#dcdbe6] pl-[5px] pt-[2.500px]">{c && <G className={i === 10 ? "text-black" : ""}>{c}</G>}</div>
              ))}
            </div>
          ))}
        </div>
      </div>
      <div className="flex w-[10px] flex-col items-center bg-[#f0f0f0]">
        <svg className="h-[6px] w-[6px]" viewBox="0 0 6 6" fill="none"><path d="M1 4l2-2 2 2" stroke="#666" /></svg>
        <div className="h-[182px] w-full bg-[#cdcdcd]" />
        <svg className="mt-auto h-[6px] w-[6px]" viewBox="0 0 6 6" fill="none"><path d="M1 2l2 2 2-2" stroke="#555" /></svg>
      </div>
    </div>
    {/* taskbar */}
    <div className="flex h-[15px] items-center bg-[#1c140b] text-white">
      <svg className="h-[15px] w-[28px]" viewBox="0 0 28 15"><path d="M9 5h4v2.500H9zM14 4.500h5v3h-5zM9 8.200h4v2.500H9zM14 8.200h5v3h-5z" fill="#fff" /></svg>
      <div className="flex h-full w-[194px] items-center bg-[#343434]">
        <svg className="h-[15px] w-[20px]" viewBox="0 0 20 15"><ellipse cx="11" cy="7.500" rx="5" ry="3.300" fill="none" stroke="#eee" strokeWidth="1.400" /></svg>
        <Fit w={73} className="text-[7px] text-[#a5a5a5]">Type here to search</Fit>
        <svg className="ml-auto mr-[5px] h-[9px] w-[8px]" viewBox="0 0 8 9" fill="none"><path d="M3 1h2v4H3zM1.500 4v2.500h5V4M4 6.500V8.500" stroke="#aaa" strokeWidth=".8" /></svg>
      </div>
      <div className="flex">
        {taskIcons.map((n, i) => (
          <div key={i} className={"flex h-[15px] w-[28.100px] justify-center " + (i === 11 ? "bg-[#4a443d]" : "")}>
            <div className={"flex h-[15px] w-[23px] justify-center " + (i === 0 || i === 3 ? "" : "border-b border-[#f3cf94]")}>
              <svg className="h-[15px] w-[26px] shrink-0" viewBox="0 0 26 16">{n}</svg>
            </div>
          </div>
        ))}
      </div>
      <svg className="ml-auto h-[15px] w-[66px] -translate-x-[9px]" viewBox="0 0 66 15" fill="none"><path d="M4 9l3-3 3 3" stroke="#ddd" /><path d="M18 6h8v4h-8z" fill="#ddd" /><path d="M31 10c-1-3 3-2 3-4 3-2 5 1 5 2 2 0 1 2 0 2z" fill="#fff" /><path d="M44.500 4.500h8v5h-8zM46 11.500h5" stroke="#ccc" /><path d="M58 7h2l2-2v5l-2-2h-2zM64 5.500v5" stroke="#888" /></svg>
      <div className="-ml-[4px] flex w-[34px] flex-col items-center leading-[6px]"><Fit w={15} className="text-[5.500px]">16:13</Fit><Fit w={33} className="text-[5.500px]">28-06-2017</Fit></div>
      <svg className="ml-[7px] mr-[13px] h-[15px] w-[14px]" viewBox="0 0 14 15" fill="none"><path d="M3 4.500h9v5H9l-1.500 2V9.500H3z" stroke="#ccc" strokeWidth=".9" /></svg>
    </div>
    {/* overlays */}
    <div className="absolute left-0 top-[240px] flex h-[7px] w-[91px] items-center border border-[#c5c5c5] bg-[#f4f4f4] pl-[2px] pt-px"><Fit w={85} className="text-[6px] leading-[7px]">https://rchivrreports.in/app/</Fit></div>
    <div className="absolute left-[462px] top-[131px] flex h-[43px] w-[90px] flex-col rounded-[2px] bg-white pl-[11px] pt-[2.500px] text-[5px] leading-[7.900px] text-[#111] shadow">
      {([["ALL", 12], ["NATIONAL", 33], ["STATE", 20], ["DISTRICT", 29], ["BLOCK", 22]] as [string, number][]).map(([t, w]) => <Fit key={t} w={w} className="pt-px !leading-[6.900px]">{t}</Fit>)}
    </div>
    <div className="absolute left-[458px] top-[115px] h-[62px] w-[101px] border-2 border-[#ec1c2c]" />
  </div>
);

const BeeHyv = () => (
  <svg className="h-[60px] w-[147px] shrink-0 border border-[#bcbcbc] bg-white" viewBox="0 0 147 60">
    <g fill="#8bc02f"><circle cx="15" cy="33" r="5.300" /><circle cx="13" cy="22.500" r="4" /><circle cx="18" cy="14.500" r="3.300" /><circle cx="25.500" cy="10.500" r="2.700" /><circle cx="33.500" cy="8.500" r="2" /></g>
    <g fill="#2e56a6"><circle cx="127" cy="18" r="5" /><circle cx="133" cy="27.500" r="4.200" /><circle cx="130" cy="36.500" r="3.500" /><circle cx="123" cy="43" r="3" /><circle cx="116" cy="46" r="2" /></g>
    <text x="26" y="37" fontSize="27" fontWeight="800" textLength="48" lengthAdjust="spacingAndGlyphs" fontFamily="Open Sans, sans-serif" fill="#2e5fae">Bee</text>
    <text x="74" y="37" fontSize="27" fontWeight="800" textLength="48" lengthAdjust="spacingAndGlyphs" fontFamily="Open Sans, sans-serif" fill="#64aa3c">Hyv</text>
  </svg>
);

const wavy = "underline decoration-wavy decoration-[#ff0000] decoration-[0.8px] underline-offset-[1px] [text-decoration-skip-ink:none]";

const RoundBtn = ({ children }: P) => (
  <div className="flex h-[11px] w-[12px] items-center justify-center rounded-full border border-[#a5a19d] bg-white">
    <svg className="h-[6px] w-[6px]" viewBox="0 0 7 7">{children}</svg>
  </div>
);
const SSep = ({ m }: { m: string }) => <div className={"h-[16px] w-px shrink-0 bg-[#cfccc9] " + m} />;

export default function App() {
  return (
    <div className="flex h-[768px] w-[1366px] flex-col overflow-hidden bg-[#f2f1f0] font-['Noto_Sans',sans-serif]">
      <Defs />
      {/* top panel */}
      <div className="flex h-[21px] shrink-0 items-center bg-gradient-to-b from-[#57544b] to-[#3e3c37] text-[13px] text-[#dfdbd2]">
        <Fit w={419} className="ml-[5px] font-bold leading-5">NMS Reporting National User Manual v1.1.docx - LibreOffice Writer</Fit>
        <svg className="ml-auto h-[20px] w-[20px]" viewBox="0 0 20 20"><circle cx="10" cy="10" r="8" fill="#12aaf0" /><circle cx="6" cy="6" r="4.800" fill="#12aaf0" /><circle cx="14" cy="14.500" r="4.800" fill="#12aaf0" /><text x="10" y="15" textAnchor="middle" fontSize="14" fontWeight="900" fontFamily="Lato, sans-serif" fill="#fff">S</text></svg>
        <svg className="ml-[10px] h-[16px] w-[16px]" viewBox="0 0 16 16" fill="none"><path d="M5 11V4M11 5v7" stroke="#dfdbd2" strokeWidth="2.400" /><path d="M1 6l4-4.500L9 6zM7 10.500l4 4.500 4-4.500z" fill="#dfdbd2" /></svg>
        <div className="ml-[12px] flex h-[17px] w-[17px] items-center justify-center rounded-[1px] bg-[#dfdbd2] text-[#3e3c37]"><Fit w={12} className="text-[11px] leading-4">En</Fit></div>
        <svg className="ml-[11px] h-[16px] w-[17px]" viewBox="0 0 17 16" fill="none"><path d="M0 5.500h3l4-3v11l-4-3H0z" fill="#dfdbd2" /><path d="M9 5.500c1.500 1.500 1.500 3.500 0 5M11.500 4c2.500 2.500 2.500 5.500 0 8" stroke="#dfdbd2" strokeWidth="1.300" /><path d="M13.500 2c3.500 3.500 3.500 8.500 0 12" stroke="#88847c" strokeWidth="1.300" /></svg>
        <Fit w={45} className="ml-[14px] leading-5">5:14 PM</Fit>
        <svg className="ml-[11px] mr-[7px] h-[16px] w-[16px]" viewBox="0 0 16 16" fill="none"><path d="M5.500 4.800a4.600 4.600 0 105 0" stroke="#dfdbd2" strokeWidth="1.800" /><path d="M8 2v6" stroke="#dfdbd2" strokeWidth="1.600" /><path d="M1 8.500h2.500M12.500 8.500H15M3 3.500l1.700 1.700M13 3.500l-1.700 1.700M3 13.500l1.700-1.700M13 13.500l-1.700-1.700M8 13v2.500" stroke="#dfdbd2" strokeWidth="2" /></svg>
      </div>
      <div className="flex min-h-0 flex-1">
        <Launcher />
        <div className="flex min-w-0 flex-1 flex-col">
          {/* standard toolbar */}
          <div className="flex h-[39px] shrink-0 items-center border-b border-[#d5d2cf]">
            <Grip m="ml-[3px]" />
            <Ic m="ml-[10px]"><NewDoc /></Ic><Arr m="ml-[7px]" />
            <Ic m="ml-[8px]"><OpenDoc /></Ic><Arr m="ml-[8px]" />
            <Ic m="ml-[9px]"><SaveIc /></Ic>
            <Ic m="ml-[7px]"><MailIc /></Ic>
            <Sep m="ml-[6px]" />
            <Btn m="ml-[5px]"><EditIc /></Btn>
            <Sep m="ml-[3px]" />
            <Ic m="ml-[7px]"><PdfIc /></Ic>
            <Ic m="ml-[7px]"><PrintIc /></Ic>
            <Ic m="ml-[7px]"><PrintIc glass /></Ic>
            <Sep m="ml-[7px]" />
            <Ic m="ml-[6px]"><AbcIc /></Ic>
            <Btn m="ml-[5px]"><AbcIc wave /></Btn>
            <Sep m="ml-[3px]" />
            <Ic m="ml-[7px]"><CutIc /></Ic>
            <Ic m="ml-[7px]"><CopyIc /></Ic>
            <Ic m="ml-[6px]"><PasteIc /></Ic>
            <Arr m="ml-[8px]" c="#aaa" />
            <Ic m="ml-[9px]"><BrushIc /></Ic>
            <Sep m="ml-[7px]" />
            <Ic m="ml-[4px]"><Undo /></Ic>
            <Arr m="ml-[9px]" />
            <Ic m="ml-[8px]"><Undo off /></Ic>
            <Arr m="ml-[8px]" c="#aaa" />
            <Sep m="ml-[9px]" />
            <Ic m="ml-[5px]"><GlobeIc /></Ic>
            <Ic m="ml-[7px]"><TableIc /></Ic>
            <Arr m="ml-[8px]" />
            <Btn m="ml-[7px]"><PaintIc /></Btn>
            <Sep m="ml-[3px]" />
            <Ic m="ml-[7px]"><CompassIc /></Ic>
            <Ic m="ml-[7px]"><ScreensIc /></Ic>
            <Ic m="ml-[7px]"><path d="M13 5.500h4M13.200 5.500v14.500M15.800 5.500v14.500" stroke="#111" strokeWidth="1.200" /><path d="M13.500 5h-1a3.500 3.500 0 000 7h1z" fill="#111" /></Ic>
            <Sep m="ml-[6px]" />
            <Ic m="ml-[7px]"><HelpIc /></Ic>
          </div>
          {/* formatting toolbar */}
          <div className="flex h-[39px] shrink-0 items-center border-b border-t border-b-[#d5d2cf] border-t-white">
            <Grip m="ml-[3px]" />
            <Ic m="ml-[10px]"><StylesIc /></Ic>
            <Sep m="ml-[6px]" />
            <Combo m="ml-[5px] w-[116px]" text="Default Style" w={76} fs="" />
            <Sep m="ml-[4px]" />
            <Combo m="ml-[4px] w-[139px]" text="Times New Roman" w={104} fs="italic" />
            <Sep m="ml-[3px]" />
            <Combo m="ml-[5px] w-[62px]" text="11" w={13} fs="" />
            <Sep m="ml-[4px]" />
            <Ic m="ml-[5px]"><LetterA kind="b" /></Ic>
            <Ic m="ml-[8px]"><LetterA kind="i" /></Ic>
            <Ic m="ml-[7px]"><LetterA kind="u" /></Ic>
            <Sep m="ml-[7px]" />
            <Btn m="ml-[4px]"><AlignIc d="M6 5.500h13M6 8h8M6 10.500h13M6 13h9M6 15.500h13M6 18h6M6 20.500h9" /></Btn>
            <Ic m="ml-[4px]"><AlignIc d="M6 5.500h14M9 8h8M6 10.500h14M10 13h6M6 15.500h14M10 18h6M8 20.500h10" /></Ic>
            <Ic m="ml-[7px]"><AlignIc d="M7 5.500h13M11 8h9M7 10.500h13M12 13h8M7 15.500h13M14 18h6M11 20.500h9" /></Ic>
            <Ic m="ml-[7px]"><AlignIc d="M6 5.500h14M6 8h14M6 10.500h14M6 13h14M6 15.500h14M6 18h14M6 20.500h14" /></Ic>
            <Sep m="ml-[6px]" />
            <Ic m="ml-[7px]"><Sheet><path d="M10.500 7.500h9M10.500 10h6M10.500 15.500h3M14.500 15.500h5M10.500 18h6" stroke="#777" /><text x="5.500" y="11" fontSize="6.500" fontWeight="700" fontFamily="Liberation Sans, sans-serif" fill="#2b5c9d">1</text><text x="5.500" y="19.500" fontSize="6.500" fontWeight="700" fontFamily="Liberation Sans, sans-serif" fill="#2b5c9d">2</text></Sheet></Ic>
            <Ic m="ml-[7px]"><Sheet><path d="M7 6h2v2H7z" fill="#888" /><path d="M11 6.500h9M11 9h6M13 13.500h7M13 16h5M15 20h5" stroke="#888" /><path d="M1 9v13h12.500z" fill="#e9c734" stroke="#a98908" /><path d="M4 16v3.500h3.500z" fill="#f5f5f0" stroke="#a98908" /></Sheet></Ic>
            <Ic m="ml-[7px]"><Sheet><path d="M12 8.500h8M12 11h6M12 13.500h8M12 16h5" stroke="#888" /><path d="M10 8v10L5.500 13z" fill="#2b62ab" /></Sheet></Ic>
            <Ic m="ml-[7px]"><Sheet><path d="M12 8.500h8M12 11h6M12 13.500h8M12 16h5" stroke="#888" /><path d="M6 8v10l4.500-5z" fill="#2b62ab" /></Sheet></Ic>
            <Sep m="ml-[7px]" />
            <Ic m="ml-[5px]"><circle cx="6" cy="6" r="3.300" fill="#dc2b2b" stroke="#8c1414" /><circle cx="6" cy="13" r="3.300" fill="#7fd12a" stroke="#3f8210" /><circle cx="11.500" cy="9" r="3.300" fill="#4b7cc0" stroke="#1f4a86" /><text x="13" y="19.500" fontSize="15" fontWeight="700" fontFamily="Noto Sans, sans-serif" fill="#a9c6ea" stroke="#224f90" strokeWidth=".9">a</text><path d="M2 20h22v6H2z" fill="#850000" /></Ic>
            <Arr m="ml-[8px]" />
            <Ic m="ml-[8px]"><path d="M2 20V15l6-1 9 1-3 5z" fill="#f3d91b" /><path d="M8 14l6-7 6 6-7 5-6 1z" fill="#f6e35a" stroke="#a08c0d" /><path d="M13 8l4-5 7 6-4 5z" fill="#d8d8d6" stroke="#8d8d8a" /><path d="M17 3l3-2h4v6l-1 2z" fill="#f5963a" /><path d="M2 20h22v6H2z" fill="#ff0" /></Ic>
            <Arr m="ml-[8px]" />
            <Ic m="ml-[8px]"><path d="M3.500 2.500h19V20h-19z" fill="url(#gBg)" stroke="#8b8d88" /><path d="M7 6.500h10M7 9h7M7 11.500h10M7 14h8M7 16.500h6" stroke="#111" strokeWidth="1" /><path d="M2 20h22v6H2z" fill="#ff0" /></Ic>
            <Arr m="ml-[8px]" />
          </div>
          {/* work area */}
          <div className="flex min-h-0 flex-1">
            <div className="flex w-[1296px] flex-col">
              <div className="flex h-[25px] shrink-0">
                <svg className="absolute ml-[8px] mt-[9px] h-[7px] w-[7px]" viewBox="0 0 7 7" fill="none"><path d="M1 0v6h6" stroke="#888" strokeWidth="2" /></svg>
                <Ruler />
              </div>
              <div className="ml-[168px] flex min-h-0 w-[984px] flex-1 flex-col bg-white shadow-[1px_0_3px_#999]">
                <div className="mt-[34px] flex h-[60px]">
                  <div className="mb-[-1px] ml-[63px] h-px w-[12px] self-end bg-[#c5c5c5]" />
                  <BeeHyv />
                  <div className="ml-[656px] h-[12px] w-[12px] self-end border-b border-l border-[#bbb]" />
                </div>
                <div className="flex h-[16px] items-center font-['Liberation_Serif',serif] text-[13.300px] leading-[18px] text-black">
                  <div className="ml-[107px] h-[5px] w-[5px] rounded-full bg-black" />
                  <Fit w={746.500} className="ml-[16px]">
                    An <span className={wavy}>Admin</span> can filter on <span className={wavy}>pre-defined</span> values for fields such as ‘Access Type’, ‘Access Level’, ‘State’, ‘District’ and ‘Block’ depicted in Figure 1.23
                  </Fit>
                </div>
                <div className="ml-[127px] mt-[41px]"><Figure /></div>
                <Fit w={49} className="ml-[469px] mt-[19px] font-['Liberation_Serif',serif] text-[11px] leading-[18px] text-[#44546a]">Figure 1.23</Fit>
              </div>
            </div>
            <div className="flex w-[13px] flex-col items-center">
              <div className="flex h-[569px] w-[13px] flex-col items-center rounded-full border border-[#b2aeaa] bg-[#dddbd9]">
                <svg className="h-[13px] w-[11px] rounded-t-full bg-[#f7f6f5]" viewBox="0 0 11 13"><path d="M3 8l2.500-3L8 8z" fill="#555" /></svg>
                <div className="mt-[475px] flex h-[31px] w-[12px] flex-col items-center justify-center gap-[2px] rounded-full border border-[#8e8a86] bg-[#f8f7f6]">
                  <i className="h-px w-[4px] bg-[#999]" /><i className="h-px w-[4px] bg-[#999]" /><i className="h-px w-[4px] bg-[#999]" />
                </div>
                <svg className="mt-auto h-[14px] w-[11px] rounded-b-full bg-[#f7f6f5]" viewBox="0 0 11 14"><path d="M2.500 6h6L5.500 9z" fill="#555" /></svg>
              </div>
              <div className="mt-[1px] flex flex-col gap-[2px]">
                <RoundBtn><path d="M3.500 0L6 2.500H4.500V4H6v1.500H1V4h1.500V2.500H1z" fill="#333" /></RoundBtn>
                <RoundBtn><path d="M1 6V3l3-2h3v5z" fill="#3d6e96" /></RoundBtn>
                <RoundBtn><path d="M1 1h5v1.500H4.500V4H6L3.500 6.500 1 4h1.500V2.500H1z" fill="#333" /></RoundBtn>
              </div>
            </div>
          </div>
          {/* drawing toolbar */}
          <div className="flex h-[39px] shrink-0 items-center border-b-2 border-t border-b-[#b5b2ae] border-t-white bg-[#f2f1f0]">
            <Grip m="ml-[3px]" />
            <Ic m="ml-[10px]"><path d="M8.500 3.500v16l3.500-3.500 3 6.500 2.500-1.200-2.800-6.300h5z" fill="#fff" stroke="#000" strokeWidth="1.200" /></Ic>
            <Sep m="ml-[6px]" />
            <Ic m="ml-[6px]"><path d="M6 6l14 14" stroke="#777" strokeWidth="1.400" /><circle cx="6" cy="6" r="2.300" fill="#666" /><circle cx="20" cy="20" r="2.300" fill="#666" /></Ic>
            <Ic m="ml-[7px]"><path d="M3 20.500h21" stroke="#bbb" strokeWidth="2" /><path d="M3.500 6.500h19v13h-19z" fill="url(#gBlue)" stroke="#1e4c8a" /></Ic>
            <Ic m="ml-[7px]"><ellipse cx="13" cy="20" rx="9" ry="2" fill="#c4c4c4" /><ellipse cx="13" cy="13" rx="9.500" ry="7" fill="url(#gBlue)" stroke="#1e4c8a" /></Ic>
            <Ic m="ml-[8px]"><path d="M4 6c4-5 12-3 10 1-2 3-9 3-8 7s7 3 6 6c-1 2-4 2-8 2" stroke="#777" strokeWidth="3.200" /><path d="M4 6c4-5 12-3 10 1-2 3-9 3-8 7s7 3 6 6c-1 2-4 2-8 2" stroke="#f5f5f5" strokeWidth="1.400" /><path d="M16.500 13l3-8 3 8v10.500h-6z" fill="#f3a31c" stroke="#9e6512" /><path d="M17 12.500l2.500-7 2.500 7z" fill="#f3ddb6" /><path d="M18.700 7.500l.8-2.500.8 2.500z" fill="#222" /></Ic>
            <Ic m="ml-[7px]"><text x="1.500" y="21.500" fontSize="22" fontWeight="800" textLength="15" lengthAdjust="spacingAndGlyphs" fontFamily="Open Sans, sans-serif" fill="#3a3a3a">A</text><path d="M17 3.500h2l1 1 1-1h2M20 4v17M17 22.500h2l1-1 1 1h2" stroke="#000" strokeWidth="3" /><path d="M17 3.500h2l1 1 1-1h2M20 4v17M17 22.500h2l1-1 1 1h2" stroke="#fff" strokeWidth="1" /></Ic>
            <Ic m="ml-[7px]"><path d="M8.500 18.500l-4 4.500 9-3.500c12 0 14-15-.5-16C-.5 4-.5 16.500 8.500 18.500z" fill="#f8f8f7" stroke="#999" strokeWidth="1.300" /><path d="M7 8h12M5.500 10.500h15M6 13h14M9 15.500h8" stroke="#888" /></Ic>
            <Sep m="ml-[7px]" />
            <Ic m="ml-[5px]"><path d="M3 20.500h21" stroke="#ccc" strokeWidth="2" /><path d="M3.500 5.500h19v14h-19z" fill="url(#gSoft)" stroke="#8a8a8a" /></Ic>
            <Arr m="ml-[8px]" />
            <Ic m="ml-[8px]"><ellipse cx="13" cy="22.500" rx="8" ry="2" fill="#c4c4c4" /><circle cx="13" cy="12.500" r="9.500" fill="url(#gSoft)" stroke="#9a9a9a" /><circle cx="9.500" cy="9.500" r="1.500" fill="#fff" stroke="#aaa" strokeWidth=".7" /><circle cx="16.500" cy="9.500" r="1.500" fill="#fff" stroke="#aaa" strokeWidth=".7" /><path d="M7.500 14.500c2 4.500 9 4.500 11 0" stroke="#fff" strokeWidth="1.800" /></Ic>
            <Arr m="ml-[8px]" />
            <Ic m="ml-[8px]"><ellipse cx="13" cy="21" rx="8" ry="1.500" fill="#ccc" /><path d="M2 13l7-6.500v4h8v-4l7 6.500-7 6.500v-4H9v4z" fill="url(#gSoft)" stroke="#999" /></Ic>
            <Arr m="ml-[8px]" />
            <Ic m="ml-[8px]"><path d="M3 23.500h21" stroke="#bbb" strokeWidth="1.500" /><path d="M2.500 2.500h21v20h-21z" fill="url(#gSoft)" stroke="#8a8a8a" /><path d="M8.500 3v19M3 8.500h20M8.500 15h14.500" stroke="#fff" /></Ic>
            <Arr m="ml-[8px]" />
            <Ic m="ml-[8px]"><path d="M4 3h18c2 0 2.500 1 2.500 2.500v9c0 2-1 2.500-2.500 2.500H12l-9 6 3-6H4c-2 0-2.500-1-2.500-2.500v-9C1.500 4 2 3 4 3z" fill="url(#gSoft)" stroke="#888" /></Ic>
            <Arr m="ml-[8px]" />
            <Ic m="ml-[8px]"><ellipse cx="13" cy="23.500" rx="8" ry="1.500" fill="#ccc" /><path d="M13 3.500l2.400 7h7.600l-6 4.400 2.300 7.100L13 17.800 6.700 22 9 14.900 3 10.500h7.600z" fill="url(#gSoft)" stroke="#888" /></Ic>
            <Arr m="ml-[8px]" />
            <Sep m="ml-[9px]" />
            <Ic m="ml-[5px]"><path d="M5 5l11-2 7 7-2 13M5 5l5 10-7 7 18 1" stroke="#aaa" strokeDasharray="3 1" /><path d="M4 4h2v2H4zM15 2h2v2h-2zM22 9h2v2h-2zM9 14h2v2H9zM2 21h2v2H2zM19 22h2v2h-2z" fill="#fff" stroke="#888" /></Ic>
            <Sep m="ml-[7px]" />
            <Ic m="ml-[7px]"><path d="M3.500 3.500h19v20h-19z" fill="#fafafa" stroke="#777" /><path d="M5.500 5.500h15v16h-15z" stroke="#aaa" strokeDasharray="1 1" /><text x="13" y="20" textAnchor="middle" fontSize="19" fontStyle="italic" fontFamily="Liberation Serif, serif" fill="#5d97d8" stroke="#2d65ad" strokeWidth=".5">A</text></Ic>
            <Ic m="ml-[7px]"><path d="M3.500 3.500h19v19h-19z" fill="#fafafa" stroke="#777" /><path d="M5.500 9.500h7v6h-7z" fill="#cd1a1a" stroke="#860d0d" /><path d="M12 19.500l2-5h4l3 5z" fill="#3c6fb5" stroke="#204a86" /><circle cx="16" cy="10" r="4" fill="#f5d524" stroke="#b3920c" /></Ic>
            <Sep m="ml-[7px]" />
            <Ic m="ml-[6px]"><path d="M5.500 7l2.500-3h13l2 3v15h-17.500z" fill="#c9c7c5" stroke="#b4b2b0" /><path d="M5 8h18" stroke="#aaa" /><path d="M3 16h4v-3.500l6 5.500-6 5.500V20H3z" fill="#deddda" stroke="#b2b0ae" /></Ic>
          </div>
          {/* status bar */}
          <div className="flex h-[22px] shrink-0 items-center pt-px text-[12px] leading-[20px] text-[#454340]">
            <Fit w={61} className="ml-[10px] pt-px">Page 71 / 76</Fit>
            <SSep m="ml-[75px]" />
            <Fit w={152} className="ml-[8px] pt-px">8 words, 42 characters selected</Fit>
            <SSep m="ml-[73px]" />
            <Fit w={64} className="ml-[8px] pt-px">Default Style</Fit>
            <SSep m="ml-[80px]" />
            <Fit w={65} className="ml-[47px] pt-px">English (USA)</Fit>
            <SSep m="ml-[45px]" />
            <SSep m="ml-[67px]" />
            <svg className="ml-[9px] h-[12px] w-[13px]" viewBox="0 0 13 12" fill="none"><path d="M0 3h9v6H0z" fill="#8b8985" /><path d="M9.500 1.500h3M11 1.500v9M9.500 10.500h3" stroke="#8b8985" /></svg>
            <SSep m="ml-[6px]" />
            <svg className="ml-[8px] h-[16px] w-[15px]" viewBox="0 0 15 16" fill="none"><path d="M1.500 1.500h8l4 4v9h-12z" fill="#eef" stroke="#7a7ad8" /><path d="M9.500 1.500v4h4M7 8h5M7 10.500h5M7 12.500h5" stroke="#7a7ad8" strokeWidth=".9" /><path d="M3 1h3.500v5L5.500 9h-1L3 6zM3.500 10.500H6V13H3.500z" fill="#e3001c" /></svg>
            <SSep m="ml-[5px]" />
            <SSep m="ml-[28px]" />
            <SSep m="ml-[198px]" />
            <svg className="ml-[11px] h-[12px] w-[56px]" viewBox="0 0 56 12" fill="none"><path d="M1.500 1.500h4l3 3v6h-7zM5.500 1.500v3h3" stroke="#8b8985" /><path d="M15.500 1.500h4l3 3v6h-7zM19.500 1.500v3h3M25.500 1.500h4l3 3v6h-7zM29.500 1.500v3h3" stroke="#55534f" /><path d="M47.500 10.500h-8v-6l3-3h5zM42.500 1.500v3h-3M47.500 1.500h4l3 3v6h-7M51.500 1.500v3h3" stroke="#8b8985" /></svg>
            <SSep m="ml-[8px]" />
            <svg className="ml-[10px] h-[14px] w-[126px]" viewBox="0 0 126 14" fill="none"><path d="M0 7.500h8M117 7.500h8M121 3.500v8" stroke="#8b8985" strokeWidth="2.200" /><path d="M14 7.500h97M39 2.500v10M50 2.500v10" stroke="#aaa8a4" strokeWidth="2" /><circle cx="62" cy="7.500" r="4" fill="#fff" stroke="#8b8985" strokeWidth="1.200" /></svg>
            <SSep m="ml-[7px]" />
            <Fit w={27} className="ml-[6px] pt-px">100%</Fit>
          </div>
        </div>
      </div>
    </div>
  );
}
